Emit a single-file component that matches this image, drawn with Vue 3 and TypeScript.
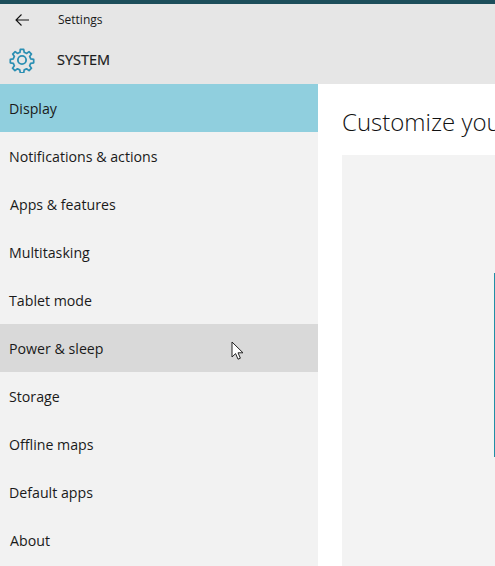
<script setup lang="ts">
const items: { label: string; inset?: boolean }[] = [
  { label: 'Display' },
  { label: 'Notifications & actions' },
  { label: 'Apps & features', inset: true },
  { label: 'Multitasking' },
  { label: 'Tablet mode' },
  { label: 'Power & sleep' },
  { label: 'Storage' },
  { label: 'Offline maps' },
  { label: 'Default apps' },
  { label: 'About', inset: true },
]
</script>

<template>
  <div class="window">
    <header class="header">
      <div class="titlebar">
        <svg class="back" width="14" height="12" viewBox="0 0 14 12" fill="none" stroke="#111" stroke-width="1.1"><path d="M14 6H1M6.5.5 1 6l5.5 5.5"/></svg>
        <span class="app-title">Settings</span>
      </div>
      <div class="section">
        <svg class="gear" width="26" height="26" viewBox="0 0 24 24" fill="none" stroke="#2b8fb3" stroke-width="1.7" stroke-linejoin="round"><circle cx="12" cy="12" r="3.8"/><path d="M10.3 1.5h3.4l.5 3a7.7 7.7 0 0 1 2.3 1l2.5-1.8 2.4 2.4-1.8 2.5a7.7 7.7 0 0 1 1 2.3l3 .5v3.4l-3 .5a7.7 7.7 0 0 1-1 2.3l1.8 2.5-2.4 2.4-2.5-1.8a7.7 7.7 0 0 1-2.3 1l-.5 3h-3.4l-.5-3a7.7 7.7 0 0 1-2.3-1l-2.5 1.8-2.4-2.4 1.8-2.5a7.7 7.7 0 0 1-1-2.3l-3-.5v-3.4l3-.5a7.7 7.7 0 0 1 1-2.3L2.8 6.1l2.4-2.4 2.5 1.8a7.7 7.7 0 0 1 2.3-1z" transform="translate(12 12) scale(.93) translate(-12 -12)"/></svg>
        <span class="section-title">SYSTEM</span>
      </div>
    </header>
    <div class="body">
      <nav class="nav">
        <div v-for="(item, i) in items" :key="item.label" class="row" :class="{ active: i === 0, hover: i === 5, inset: item.inset }">{{ item.label }}</div>
      </nav>
      <main class="content">
        <h1 class="heading">Customize your display</h1>
        <div class="panel"></div>
        <div class="accent"></div>
      </main>
    </div>
    <svg class="cursor" width="14" height="20" viewBox="0 0 14 20"><path d="M1 1v15l3.6-3.4 2.4 5.6 2.4-1-2.4-5.4h5z" fill="#fff" stroke="#222" stroke-width="1"/></svg>
  </div>
</template>

<style>
html, body { margin: 0; overflow: hidden; }
</style>

<style scoped>
.window { position: relative; width: 495px; height: 566px; overflow: hidden; background: #fff; font-family: "Open Sans", "Liberation Sans", sans-serif; color: #1a1a1a; border-top: 4px solid #1d4e5b; box-sizing: border-box; }
.header { height: 80px; background: #e6e6e6; }
.titlebar { display: flex; align-items: center; height: 31px; }
.back { margin-left: 15px; }
.app-title { margin-left: 29px; font-size: 12px; }
.section { display: flex; align-items: center; height: 49px; }
.gear { margin-left: 9px; }
.section-title { margin-left: 22px; font-size: 14.5px; font-weight: 500; line-height: 20px; padding-top: 1px; -webkit-text-stroke: 0.2px #1a1a1a; }
.body { display: flex; height: 482px; }
.nav { width: 318px; flex: none; background: #f2f2f2; }
.row { height: 48px; display: flex; align-items: center; padding-left: 9px; font-size: 14.2px; }
.inset { padding-left: 10px; }
.active { background: #90cfde; }
.hover { background: #d9d9d9; }
.content { position: relative; flex: 1; min-width: 0; padding: 0 0 0 24px; overflow: hidden; }
.heading { margin: 20px 0 0; height: 51px; font-size: 24px; line-height: 36px; font-weight: 300; white-space: nowrap; color: #111; }
.panel { height: 420px; width: 400px; background: #f3f3f3; }
.accent { position: absolute; top: 189px; left: 176px; width: 1px; height: 184px; background: #1f8fa6; }
.cursor { position: absolute; left: 231px; top: 337px; }
</style>
